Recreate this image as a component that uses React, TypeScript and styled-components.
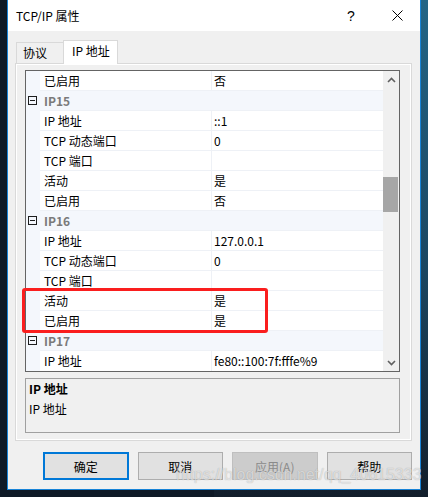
import * as React from 'react'
import styled, { createGlobalStyle } from 'styled-components'

const GlobalStyle = createGlobalStyle`
	html, body {
		margin: 0;
		padding: 0;
	}
	body {
		width: 428px;
		height: 497px;
		overflow: hidden;
		font-family: "Noto Sans CJK SC", "Noto Sans", sans-serif;
		font-size: 12px;
		color: #000;
		background:
			linear-gradient(90deg, #0e1926 0, #0e1926 50%, transparent 50%),
			linear-gradient(180deg, #236586 0%, #1a4560 55%, #121e2b 100%);
	}
`

type Row =
	| { kind: 'category'; label: string }
	| { kind: 'prop'; label: string; value: string }

const rows: Row[] = [
	{ kind: 'prop', label: '已启用', value: '否' },
	{ kind: 'category', label: 'IP15' },
	{ kind: 'prop', label: 'IP 地址', value: '::1' },
	{ kind: 'prop', label: 'TCP 动态端口', value: '0' },
	{ kind: 'prop', label: 'TCP 端口', value: '' },
	{ kind: 'prop', label: '活动', value: '是' },
	{ kind: 'prop', label: '已启用', value: '否' },
	{ kind: 'category', label: 'IP16' },
	{ kind: 'prop', label: 'IP 地址', value: '127.0.0.1' },
	{ kind: 'prop', label: 'TCP 动态端口', value: '0' },
	{ kind: 'prop', label: 'TCP 端口', value: '' },
	{ kind: 'prop', label: '活动', value: '是' },
	{ kind: 'prop', label: '已启用', value: '是' },
	{ kind: 'category', label: 'IP17' },
	{ kind: 'prop', label: 'IP 地址', value: 'fe80::100:7f:fffe%9' }
]

export default function App() {
	return (
		<>
			<GlobalStyle />
			<Desktop>
				<Window>
					<TitleBar>
						<Title>TCP/IP 属性</Title>
						<CaptionButton>?</CaptionButton>
						<CaptionButton>
							<svg width="11" height="11" viewBox="0 0 11 11">
								<path d="M0.5 0.5 L10.5 10.5 M10.5 0.5 L0.5 10.5" stroke="#000" strokeWidth="1" fill="none" />
							</svg>
						</CaptionButton>
					</TitleBar>
					<Body>
						<TabStrip>
							<Tab>协议</Tab>
							<Tab $active>IP 地址</Tab>
						</TabStrip>
						<TabPanel>
							<Grid>
								<RowsArea>
									{rows.map((row, i) =>
										row.kind === 'category' ? (
											<GridRow key={i} $category $last={i === rows.length - 1}>
												<Margin>
													<Collapse />
												</Margin>
												<CategoryLabel>{row.label}</CategoryLabel>
											</GridRow>
										) : (
											<GridRow key={i} $last={i === rows.length - 1}>
												<Margin />
												<LabelCell>{row.label}</LabelCell>
												<ValueCell>{row.value}</ValueCell>
											</GridRow>
										)
									)}
								</RowsArea>
								<ScrollBar>
									<ScrollArrow>
										<svg width="9" height="6" viewBox="0 0 9 6">
											<path d="M1 5 L4.5 1.5 L8 5" stroke="#606060" strokeWidth="1.6" fill="none" />
										</svg>
									</ScrollArrow>
									<ScrollTrack>
										<Thumb />
									</ScrollTrack>
									<ScrollArrow>
										<svg width="9" height="6" viewBox="0 0 9 6">
											<path d="M1 1 L4.5 4.5 L8 1" stroke="#606060" strokeWidth="1.6" fill="none" />
										</svg>
									</ScrollArrow>
								</ScrollBar>
								<Highlight />
							</Grid>
							<Description>
								<DescTitle>IP 地址</DescTitle>
								<DescText>IP 地址</DescText>
							</Description>
						</TabPanel>
						<ButtonRow>
							<Button $default>确定</Button>
							<Button>取消</Button>
							<Button disabled>应用(A)</Button>
							<Button>帮助</Button>
						</ButtonRow>
					</Body>
				</Window>
				<Watermark>https://blog.csdn.net/qq_40615333</Watermark>
			</Desktop>
		</>
	)
}

const Desktop = styled.div`
	position: relative;
	width: 428px;
	height: 497px;
	padding-left: 7px;
	box-sizing: border-box;
`

const Window = styled.div`
	width: 414px;
	height: 490px;
	box-sizing: border-box;
	border: 1px solid #1883d7;
	border-top: none;
	background: #f0f0f0;
	display: flex;
	flex-direction: column;
`

const TitleBar = styled.div`
	height: 31px;
	flex: none;
	background: #fff;
	display: flex;
	align-items: center;
	padding-left: 8px;
`

const Title = styled.div`
	flex: 1;
	font-size: 12px;
	line-height: 16px;
	padding-top: 1px;
`

const CaptionButton = styled.div`
	width: 46px;
	height: 31px;
	display: flex;
	align-items: center;
	justify-content: center;
	font-family: "Liberation Sans", sans-serif;
	font-size: 14px;
`

const Body = styled.div`
	flex: 1;
	padding: 9px 8px 0 7px;
	display: flex;
	flex-direction: column;
`

const TabStrip = styled.div`
	height: 23px;
	display: flex;
	align-items: flex-end;
	padding-left: 1px;
	position: relative;
	z-index: 1;
`

const Tab = styled.div<{ $active?: boolean }>`
	box-sizing: border-box;
	height: ${(p) => (p.$active ? '24px' : '21px')};
	margin-bottom: ${(p) => (p.$active ? '-1px' : '0')};
	padding: ${(p) => (p.$active ? '0 7px 0 8px' : '0 16px 0 6px')};
	border: 1px solid #d9d9d9;
	border-bottom: none;
	border-left: ${(p) => (p.$active ? '1px solid #d9d9d9' : '1px solid #d9d9d9')};
	margin-left: ${(p) => (p.$active ? '-1px' : '0')};
	background: ${(p) => (p.$active ? '#fff' : '#f0f0f0')};
	line-height: 19px;
	font-size: 12px;
`

const TabPanel = styled.div`
	width: 397px;
	box-sizing: border-box;
	border: 1px solid #d9d9d9;
	box-shadow: inset 0 0 0 1px #fff;
	padding: 6px 10px 7px 9px;
	background: #f0f0f0;
`

const Grid = styled.div`
	position: relative;
	width: 375px;
	height: 302px;
	box-sizing: border-box;
	border: 1px solid #646464;
	background: #fff;
	display: flex;
`

const RowsArea = styled.div`
	width: 357px;
	display: flex;
	flex-direction: column;
	overflow: hidden;
`

const GridRow = styled.div<{ $category?: boolean; $last?: boolean }>`
	height: 20px;
	flex: none;
	display: grid;
	grid-template-columns: 14px 171px 1fr;
	background: ${(p) => (p.$category ? '#f4f7fc' : '#fff')};
	& > *:not(:first-child) {
		box-sizing: border-box;
		border-bottom: ${(p) => (p.$last ? 'none' : '1px solid #eef1f6')};
	}
`

const Margin = styled.div`
	background: #f4f7fc;
	display: flex;
	align-items: center;
	padding-left: 2px;
`

const Collapse = styled.div`
	width: 9px;
	height: 9px;
	box-sizing: border-box;
	border: 1px solid #1e1e1e;
	position: relative;
	margin-top: -1px;
	&::after {
		content: '';
		position: absolute;
		left: 1px;
		right: 1px;
		top: 3px;
		height: 1px;
		background: #1e1e1e;
	}
`

const LabelCell = styled.div`
	padding-left: 4px;
	line-height: 19px;
	white-space: nowrap;
`

const ValueCell = styled.div`
	border-left: 1px solid #eef1f6;
	padding-left: 2px;
	line-height: 19px;
	white-space: nowrap;
`

const CategoryLabel = styled.div`
	grid-column: 2 / 4;
	padding-left: 4px;
	line-height: 19px;
	font-weight: bold;
	color: #7a7a7a;
`

const ScrollBar = styled.div`
	width: 16px;
	background: #f0f0f0;
	display: flex;
	flex-direction: column;
`

const ScrollArrow = styled.div`
	height: 17px;
	display: flex;
	align-items: center;
	justify-content: center;
`

const ScrollTrack = styled.div`
	flex: 1;
`

const Thumb = styled.div`
	margin-top: 89px;
	width: 15px;
	height: 35px;
	background: #a6a6a6;
`

const Highlight = styled.div`
	position: absolute;
	left: -4px;
	top: 217px;
	width: 246px;
	height: 45px;
	box-sizing: border-box;
	border: 3px solid #fa1e1e;
	border-radius: 3px;
	pointer-events: none;
`

const Description = styled.div`
	margin-top: 6px;
	width: 375px;
	height: 55px;
	box-sizing: border-box;
	border: 1px solid #a0a0a0;
	padding-left: 3px;
`

const DescTitle = styled.div`
	font-weight: bold;
	line-height: 20px;
`

const DescText = styled.div`
	line-height: 20px;
`

const ButtonRow = styled.div`
	display: flex;
	gap: 9px;
	margin-top: 11px;
	padding-left: 28px;
`

const Button = styled.button<{ $default?: boolean }>`
	width: 86px;
	height: 28px;
	box-sizing: border-box;
	padding: 0;
	font-family: "Noto Sans CJK SC", "Noto Sans", sans-serif;
	font-size: 12px;
	color: #000;
	background: #e1e1e1;
	border: ${(p) => (p.$default ? '2px solid #0078d7' : '1px solid #adadad')};
	&:disabled {
		background: #cccccc;
		border-color: #bfbfbf;
		color: #8a8a8a;
	}
`

const Watermark = styled.div`
	position: absolute;
	left: 176px;
	top: 465px;
	font-family: "Liberation Sans", Arial, sans-serif;
	font-size: 16px;
	line-height: 20px;
	color: rgba(255, 255, 255, 0.6);
	text-shadow: 0 0 1px rgba(0, 0, 0, 0.3);
	white-space: nowrap;
	pointer-events: none;
`
